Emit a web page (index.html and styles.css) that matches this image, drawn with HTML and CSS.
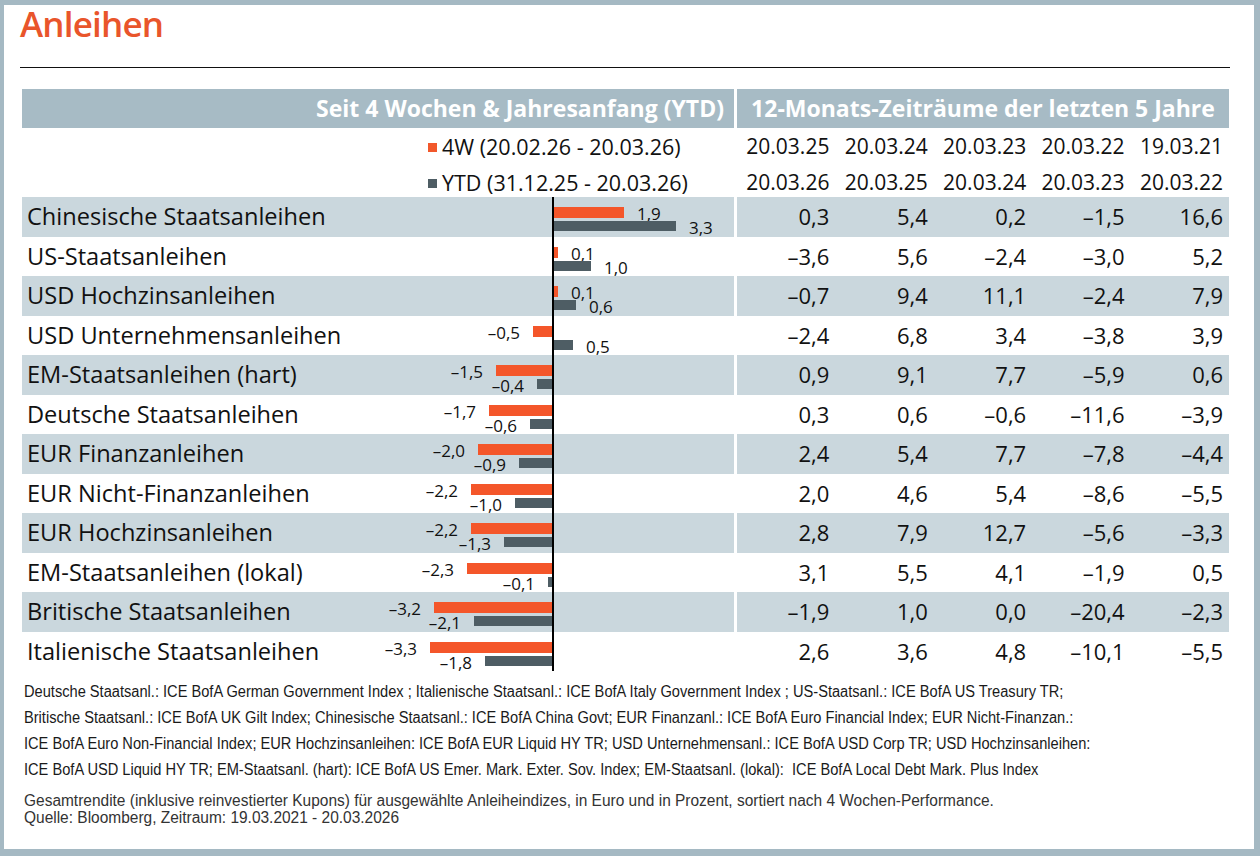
FILE: index.html
```html
<!DOCTYPE html>
<html lang="de">
<head>
<meta charset="utf-8">
<title>Anleihen</title>
<link rel="stylesheet" href="styles.css">
</head>
<body>
<div class="panel">
  <h1 class="title">Anleihen</h1>
  <div class="rule"></div>

  <div class="table">
    <div class="band">
      <div class="band-l">Seit 4 Wochen &amp; Jahresanfang (YTD)</div>
      <div class="band-r">12-Monats-Zeiträume der letzten 5 Jahre</div>
    </div>

    <div class="legend-area">
      <div class="legend">
        <div class="legend-line"><span class="sw sw-o"></span>4W (20.02.26 - 20.03.26)</div>
        <div class="legend-line"><span class="sw sw-g"></span>YTD (31.12.25 - 20.03.26)</div>
      </div>
      <div class="dates">
        <div>20.03.25</div><div>20.03.24</div><div>20.03.23</div><div>20.03.22</div><div>19.03.21</div>
        <div>20.03.26</div><div>20.03.25</div><div>20.03.24</div><div>20.03.23</div><div>20.03.22</div>
      </div>
    </div>

    <div class="row alt">
      <div class="lcell">
        <div class="label">Chinesische Staatsanleihen</div>
        <div class="neg"><div class="line"></div><div class="line"></div></div>
        <div class="pos">
          <div class="line"><span class="bar o" style="width:70px"></span><span class="val">1,9</span></div>
          <div class="line"><span class="bar g" style="width:122px"></span><span class="val">3,3</span></div>
        </div>
      </div>
      <div class="rcell"><div>0,3</div><div>5,4</div><div>0,2</div><div>–1,5</div><div>16,6</div></div>
    </div>

    <div class="row">
      <div class="lcell">
        <div class="label">US-Staatsanleihen</div>
        <div class="neg"><div class="line"></div><div class="line"></div></div>
        <div class="pos">
          <div class="line"><span class="bar o" style="width:4px"></span><span class="val">0,1</span></div>
          <div class="line"><span class="bar g" style="width:37px"></span><span class="val">1,0</span></div>
        </div>
      </div>
      <div class="rcell"><div>–3,6</div><div>5,6</div><div>–2,4</div><div>–3,0</div><div>5,2</div></div>
    </div>

    <div class="row alt">
      <div class="lcell">
        <div class="label">USD Hochzinsanleihen</div>
        <div class="neg"><div class="line"></div><div class="line"></div></div>
        <div class="pos">
          <div class="line"><span class="bar o" style="width:4px"></span><span class="val">0,1</span></div>
          <div class="line"><span class="bar g" style="width:22px"></span><span class="val">0,6</span></div>
        </div>
      </div>
      <div class="rcell"><div>–0,7</div><div>9,4</div><div>11,1</div><div>–2,4</div><div>7,9</div></div>
    </div>

    <div class="row">
      <div class="lcell">
        <div class="label">USD Unternehmensanleihen</div>
        <div class="neg">
          <div class="line"><span class="val">–0,5</span><span class="bar o" style="width:19px"></span></div>
          <div class="line"></div>
        </div>
        <div class="pos">
          <div class="line"></div>
          <div class="line"><span class="bar g" style="width:19px"></span><span class="val">0,5</span></div>
        </div>
      </div>
      <div class="rcell"><div>–2,4</div><div>6,8</div><div>3,4</div><div>–3,8</div><div>3,9</div></div>
    </div>

    <div class="row alt">
      <div class="lcell">
        <div class="label">EM-Staatsanleihen (hart)</div>
        <div class="neg">
          <div class="line"><span class="val">–1,5</span><span class="bar o" style="width:56px"></span></div>
          <div class="line"><span class="val">–0,4</span><span class="bar g" style="width:15px"></span></div>
        </div>
        <div class="pos"><div class="line"></div><div class="line"></div></div>
      </div>
      <div class="rcell"><div>0,9</div><div>9,1</div><div>7,7</div><div>–5,9</div><div>0,6</div></div>
    </div>

    <div class="row">
      <div class="lcell">
        <div class="label">Deutsche Staatsanleihen</div>
        <div class="neg">
          <div class="line"><span class="val">–1,7</span><span class="bar o" style="width:63px"></span></div>
          <div class="line"><span class="val">–0,6</span><span class="bar g" style="width:22px"></span></div>
        </div>
        <div class="pos"><div class="line"></div><div class="line"></div></div>
      </div>
      <div class="rcell"><div>0,3</div><div>0,6</div><div>–0,6</div><div>–11,6</div><div>–3,9</div></div>
    </div>

    <div class="row alt">
      <div class="lcell">
        <div class="label">EUR Finanzanleihen</div>
        <div class="neg">
          <div class="line"><span class="val">–2,0</span><span class="bar o" style="width:74px"></span></div>
          <div class="line"><span class="val">–0,9</span><span class="bar g" style="width:33px"></span></div>
        </div>
        <div class="pos"><div class="line"></div><div class="line"></div></div>
      </div>
      <div class="rcell"><div>2,4</div><div>5,4</div><div>7,7</div><div>–7,8</div><div>–4,4</div></div>
    </div>

    <div class="row">
      <div class="lcell">
        <div class="label">EUR Nicht-Finanzanleihen</div>
        <div class="neg">
          <div class="line"><span class="val">–2,2</span><span class="bar o" style="width:81px"></span></div>
          <div class="line"><span class="val">–1,0</span><span class="bar g" style="width:37px"></span></div>
        </div>
        <div class="pos"><div class="line"></div><div class="line"></div></div>
      </div>
      <div class="rcell"><div>2,0</div><div>4,6</div><div>5,4</div><div>–8,6</div><div>–5,5</div></div>
    </div>

    <div class="row alt">
      <div class="lcell">
        <div class="label">EUR Hochzinsanleihen</div>
        <div class="neg">
          <div class="line"><span class="val">–2,2</span><span class="bar o" style="width:81px"></span></div>
          <div class="line"><span class="val">–1,3</span><span class="bar g" style="width:48px"></span></div>
        </div>
        <div class="pos"><div class="line"></div><div class="line"></div></div>
      </div>
      <div class="rcell"><div>2,8</div><div>7,9</div><div>12,7</div><div>–5,6</div><div>–3,3</div></div>
    </div>

    <div class="row">
      <div class="lcell">
        <div class="label">EM-Staatsanleihen (lokal)</div>
        <div class="neg">
          <div class="line"><span class="val">–2,3</span><span class="bar o" style="width:85px"></span></div>
          <div class="line"><span class="val">–0,1</span><span class="bar g" style="width:4px"></span></div>
        </div>
        <div class="pos"><div class="line"></div><div class="line"></div></div>
      </div>
      <div class="rcell"><div>3,1</div><div>5,5</div><div>4,1</div><div>–1,9</div><div>0,5</div></div>
    </div>

    <div class="row alt">
      <div class="lcell">
        <div class="label">Britische Staatsanleihen</div>
        <div class="neg">
          <div class="line"><span class="val">–3,2</span><span class="bar o" style="width:118px"></span></div>
          <div class="line"><span class="val">–2,1</span><span class="bar g" style="width:78px"></span></div>
        </div>
        <div class="pos"><div class="line"></div><div class="line"></div></div>
      </div>
      <div class="rcell"><div>–1,9</div><div>1,0</div><div>0,0</div><div>–20,4</div><div>–2,3</div></div>
    </div>

    <div class="row">
      <div class="lcell">
        <div class="label">Italienische Staatsanleihen</div>
        <div class="neg">
          <div class="line"><span class="val">–3,3</span><span class="bar o" style="width:122px"></span></div>
          <div class="line"><span class="val">–1,8</span><span class="bar g" style="width:67px"></span></div>
        </div>
        <div class="pos"><div class="line"></div><div class="line"></div></div>
      </div>
      <div class="rcell"><div>2,6</div><div>3,6</div><div>4,8</div><div>–10,1</div><div>–5,5</div></div>
    </div>
  </div>

  <div class="notes">
    <div>Deutsche Staatsanl.: ICE BofA German Government Index ; Italienische Staatsanl.: ICE BofA Italy Government Index ; US-Staatsanl.: ICE BofA US Treasury TR;</div>
    <div>Britische Staatsanl.: ICE BofA UK Gilt Index; Chinesische Staatsanl.: ICE BofA China Govt; EUR Finanzanl.: ICE BofA Euro Financial Index; EUR Nicht-Finanzan.:</div>
    <div>ICE BofA Euro Non-Financial Index; EUR Hochzinsanleihen: ICE BofA EUR Liquid HY TR; USD Unternehmensanl.: ICE BofA USD Corp TR; USD Hochzinsanleihen:</div>
    <div>ICE BofA USD Liquid HY TR; EM-Staatsanl. (hart): ICE BofA US Emer. Mark. Exter. Sov. Index; EM-Staatsanl. (lokal):&nbsp; ICE BofA Local Debt Mark. Plus Index</div>
  </div>
  <div class="source">
    <div>Gesamtrendite (inklusive reinvestierter Kupons) für ausgewählte Anleiheindizes, in Euro und in Prozent, sortiert nach 4 Wochen-Performance.</div>
    <div>Quelle: Bloomberg, Zeitraum: 19.03.2021 - 20.03.2026</div>
  </div>
</div>
</body>
</html>
```

FILE: styles.css
```css
html, body {
  margin: 0;
  padding: 0;
}
body {
  background: #a5b9c3;
  font-family: "Open Sans", "Noto Sans", sans-serif;
  color: #111;
  width: 1260px;
  height: 856px;
  overflow: hidden;
}
.panel {
  margin: 5px 6px 0 4px;
  height: 844px;
  background: #fff;
  padding: 1px 24px 0 16px;
  box-sizing: border-box;
}
.title {
  margin: 0;
  font-size: 35px;
  line-height: 35px;
  font-weight: 600;
  color: #e9552b;
  letter-spacing: -0.8px;
}
.rule {
  margin-top: 26px;
  height: 1px;
  background: #111;
}
.table {
  margin: 21px 1px 0 2px;
}
.band {
  display: flex;
  gap: 3px;
  height: 39px;
}
.band-l, .band-r {
  background: #a7bbc5;
  color: #fff;
  font-weight: 700;
  font-size: 23px;
  line-height: 39px;
  white-space: nowrap;
}
.band-l {
  width: 712px;
  text-align: right;
  padding-right: 10px;
  box-sizing: border-box;
}
.band-r {
  width: 492px;
  text-align: center;
}
.legend-area {
  display: flex;
  gap: 3px;
  height: 69px;
  font-size: 21px;
}
.legend {
  width: 712px;
  padding-left: 406px;
  padding-top: 1px;
  box-sizing: border-box;
  font-size: 21.5px;
}
.legend-line {
  height: 36px;
  line-height: 36px;
  display: flex;
  align-items: center;
  white-space: nowrap;
}
.sw {
  width: 9px;
  height: 9px;
  margin-right: 5px;
  flex: none;
}
.sw-o { background: #f2582b; }
.sw-g { background: #4e5d64; }
.dates {
  width: 492px;
  display: grid;
  grid-template-columns: repeat(5, 1fr);
  grid-auto-rows: 36px;
}
.dates div {
  text-align: right;
  padding-right: 6px;
  line-height: 36px;
  white-space: nowrap;
}
.row {
  display: flex;
  gap: 3px;
  height: 39.5px;
}
.lcell {
  width: 712px;
  display: flex;
}
.rcell {
  width: 492px;
  display: grid;
  grid-template-columns: repeat(5, 1fr);
  font-size: 22px;
  line-height: 39.5px;
}
.rcell div {
  text-align: right;
  padding-right: 6px;
}
.row.alt .lcell, .row.alt .rcell {
  background: #cad7dd;
}
.label {
  width: 318px;
  padding-left: 5px;
  box-sizing: border-box;
  font-size: 23.6px;
  line-height: 39.5px;
  white-space: nowrap;
}
.neg, .pos {
  padding-top: 10px;
  box-sizing: border-box;
}
.neg {
  width: 212px;
}
.pos {
  width: 182px;
  border-left: 2px solid #000;
}
.line {
  height: 11px;
  display: flex;
  align-items: flex-start;
  gap: 13px;
}
.line + .line {
  margin-top: 3px;
}
.neg .line {
  justify-content: flex-end;
}
.bar {
  display: block;
  flex: none;
  height: 11px;
}
.bar.o { background: #f4562a; }
.bar.g { background: #4e5d64; height: 10px; }
.val {
  font-size: 17px;
  line-height: 11px;
  padding-top: 1px;
  white-space: nowrap;
}
.notes, .source {
  padding-left: 4px;
  font-family: "Liberation Sans", Arial, sans-serif;
  font-size: 16px;
  white-space: nowrap;
  transform-origin: 4px 0;
}
.notes {
  margin-top: 8px;
  line-height: 26px;
  color: #1a1a1a;
  transform: scaleX(0.914);
}
.source {
  margin-top: 9px;
  line-height: 17px;
  color: #333;
  transform: scaleX(0.967);
}
```
